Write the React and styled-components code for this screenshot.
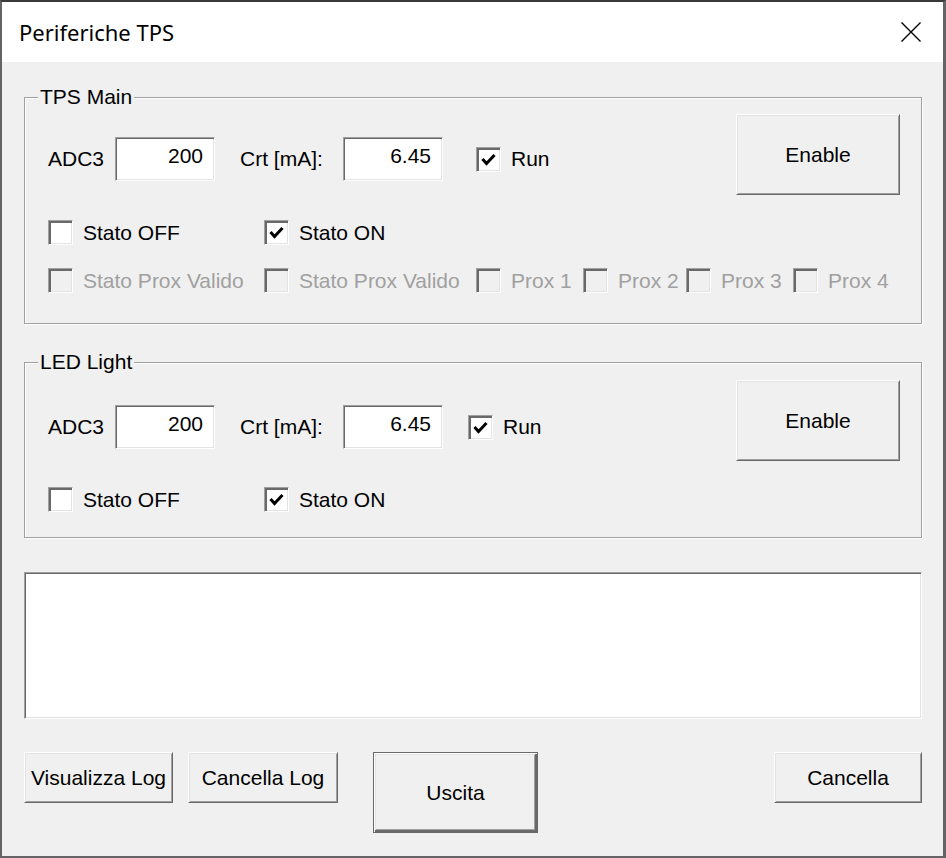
import React from "react";
import styled, { createGlobalStyle } from "styled-components";

const Global = createGlobalStyle`
  html, body { margin: 0; padding: 0; background: #f0f0f0; }
  * { box-sizing: border-box; }
`;

const Window = styled.div`
  width: 946px;
  height: 858px;
  display: flex;
  flex-direction: column;
  border-style: solid;
  border-color: #3a3a3a #646464 #646464 #646464;
  border-width: 2px 3px 2px 2px;
  background: #f0f0f0;
  font-family: "Liberation Sans", Arial, sans-serif;
  font-size: 21px;
  color: #000;
`;

const TitleBar = styled.div`
  height: 60px;
  flex: none;
  background: #fff;
  display: flex;
  align-items: center;
  padding: 0 22px 0 17px;
`;

const Title = styled.div`
  font-family: "Noto Sans", "Liberation Sans", sans-serif;
  font-size: 22px;
  flex: 1;
`;

const CloseIcon = () => (
  <svg width="20" height="20" viewBox="0 0 20 20">
    <path d="M0.5 0.5 L19.5 19.5 M19.5 0.5 L0.5 19.5" stroke="#000" strokeWidth="1.4" fill="none" />
  </svg>
);

const Body = styled.div`
  flex: 1;
  display: flex;
  flex-direction: column;
  padding: 35px 21px 0 22px;
`;

const Group = styled.div`
  position: relative;
  margin-top: ${(p) => p.$mt || 0}px;
  border: 1px solid #a0a0a0;
  box-shadow: inset 1px 1px 0 #fff, 1px 1px 0 #fff;
  display: grid;
  grid-template-columns: 1fr auto;
  align-items: start;
  padding: 0 21px ${(p) => p.$pb}px 23px;
`;

const Legend = styled.div`
  position: absolute;
  left: 13px;
  top: -13px;
  line-height: 24px;
  padding: 0 2px;
  background: #f0f0f0;
`;

const Row = styled.div`
  display: flex;
  align-items: center;
  grid-column: ${(p) => (p.$full ? "1 / -1" : "1")};
  height: ${(p) => p.$h}px;
  margin-top: ${(p) => p.$mt || 0}px;
`;

const FieldLabel = styled.div`
  width: ${(p) => p.$w}px;
  white-space: nowrap;
`;

const TextBox = styled.input`
  width: 100px;
  height: 44px;
  font-family: "Liberation Sans", Arial, sans-serif;
  font-size: 21px;
  color: #000;
  text-align: right;
  padding: 0 11px 6px 0;
  margin: 0;
  background: #fff;
  border: 1px solid;
  border-color: #a0a0a0 #fff #fff #a0a0a0;
  box-shadow: inset 1px 1px 0 #696969, inset -1px -1px 0 #e3e3e3;
  outline: none;
  margin-right: ${(p) => p.$mr || 0}px;
`;

const CheckItem = styled.div`
  display: flex;
  align-items: center;
  gap: 10px;
  width: ${(p) => (p.$w ? `${p.$w}px` : "auto")};
  flex: none;
  white-space: nowrap;
  color: ${(p) => (p.$disabled ? "#a0a0a0" : "#000")};
`;

const Box = styled.span`
  width: 25px;
  height: 25px;
  flex: none;
  display: flex;
  align-items: center;
  justify-content: center;
  background: ${(p) => (p.$disabled ? "#f0f0f0" : "#fff")};
  border: 1px solid;
  border-color: #a0a0a0 #fff #fff #a0a0a0;
  box-shadow: inset 2px 2px 0 #696969, inset -1px -1px 0 #e3e3e3;
`;

const Check = () => (
  <svg width="15" height="13" viewBox="0 0 15 13">
    <polyline points="1.5,6 5.5,10.5 13.5,2" stroke="#000" strokeWidth="3" fill="none" />
  </svg>
);

const CheckBox = ({ label, checked, disabled, w }) => (
  <CheckItem $w={w} $disabled={disabled}>
    <Box $disabled={disabled}>{checked && <Check />}</Box>
    <span>{label}</span>
  </CheckItem>
);

const Button = styled.button`
  width: ${(p) => p.$w}px;
  height: ${(p) => p.$h}px;
  flex: none;
  margin: ${(p) => p.$m || "0"};
  font-family: "Liberation Sans", Arial, sans-serif;
  font-size: 21px;
  color: #000;
  background: #f0f0f0;
  padding: 0;
  white-space: nowrap;
  border: 1px solid;
  border-color: ${(p) => (p.$default ? "#696969" : "#fff #696969 #696969 #fff")};
  box-shadow: ${(p) =>
    p.$default
      ? "inset 1px 1px 0 #fff, inset -2px -2px 0 #696969, inset 2px 2px 0 #e3e3e3, inset -3px -3px 0 #a0a0a0"
      : "inset 1px 1px 0 #e3e3e3, inset -1px -1px 0 #a0a0a0"};
`;

const SideButton = styled(Button)`
  grid-column: 2;
  grid-row: 1 / span 2;
`;

const LogBox = styled.div`
  margin-top: 34px;
  height: 147px;
  background: #fff;
  border: 1px solid;
  border-color: #a0a0a0 #fff #fff #a0a0a0;
  box-shadow: inset 1px 1px 0 #696969, inset -1px -1px 0 #e3e3e3;
`;

const ButtonRow = styled.div`
  display: flex;
  align-items: flex-start;
  margin-top: 33px;
`;

const DeviceRow = ({ runGap, mt }) => (
  <Row $h={44} $mt={mt}>
    <FieldLabel $w={67}>ADC3</FieldLabel>
    <TextBox readOnly value="200" $mr={25} />
    <FieldLabel $w={103}>Crt [mA]:</FieldLabel>
    <TextBox readOnly value="6.45" $mr={runGap} />
    <CheckBox label="Run" checked />
  </Row>
);

export default function App() {
  return (
    <>
      <Global />
      <Window>
        <TitleBar>
          <Title>Periferiche TPS</Title>
          <CloseIcon />
        </TitleBar>
        <Body>
          <Group $pb={30}>
            <Legend>TPS Main</Legend>
            <DeviceRow runGap={33} mt={39} />
            <SideButton $w={164} $h={81} $m="16px 0 0 0">Enable</SideButton>
            <Row $h={25} $mt={39}>
              <CheckBox label="Stato OFF" w={216} />
              <CheckBox label="Stato ON" checked />
            </Row>
            <Row $h={25} $mt={23} $full>
              <CheckBox label="Stato Prox Valido" disabled w={216} />
              <CheckBox label="Stato Prox Valido" disabled w={212} />
              <CheckBox label="Prox 1" disabled w={107} />
              <CheckBox label="Prox 2" disabled w={103} />
              <CheckBox label="Prox 3" disabled w={107} />
              <CheckBox label="Prox 4" disabled />
            </Row>
          </Group>

          <Group $mt={38} $pb={25}>
            <Legend>LED Light</Legend>
            <DeviceRow runGap={25} mt={42} />
            <SideButton $w={164} $h={81} $m="17px 0 0 0">Enable</SideButton>
            <Row $h={25} $mt={38}>
              <CheckBox label="Stato OFF" w={216} />
              <CheckBox label="Stato ON" checked />
            </Row>
          </Group>

          <LogBox />

          <ButtonRow>
            <Button $w={149} $h={51}>Visualizza Log</Button>
            <Button $w={150} $h={51} $m="0 0 0 15px">Cancella Log</Button>
            <Button $w={165} $h={81} $m="0 0 0 35px" $default>Uscita</Button>
            <Button $w={148} $h={51} $m="0 0 0 auto">Cancella</Button>
          </ButtonRow>
        </Body>
      </Window>
    </>
  );
}
